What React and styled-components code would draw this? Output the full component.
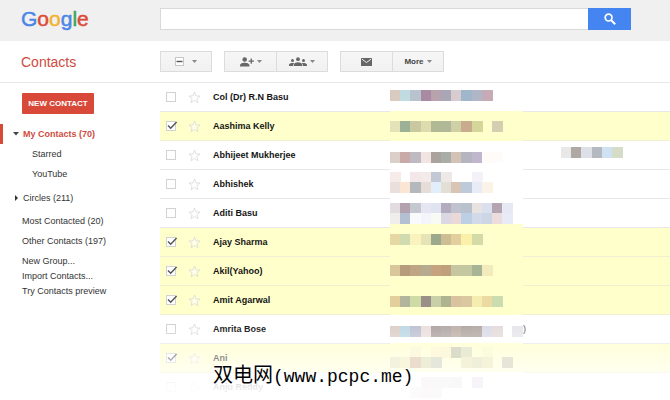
import React, { useState } from "react";
import styled, { createGlobalStyle } from "styled-components";

const Colors = {
    TEXT: "#151515",
    RED: "#d9493a",
    RED_TEXT: "#cf4b40",
    BLUE: "#4585f2",
    BAR: "#f0f0f0",
    LINE: "#e8e8e8",
    SELECTED: "#ffffcc",
    SELECTED_LINE: "#efefd2",
};

const GlobalStyle = createGlobalStyle`
    * {
        box-sizing: border-box;
    }
    body {
        margin: 0;
        background: #fff;
        color: ${Colors.TEXT};
        font-family: "Liberation Sans", Arial, sans-serif;
        font-size: 9px;
    }
    button, input {
        font-family: inherit;
        font-size: inherit;
        color: inherit;
        margin: 0;
        padding: 0;
    }
`;

const Page = styled.div`
    position: relative;
    height: 100vh;
    overflow: hidden;
`;

const Header = styled.header`
    display: flex;
    align-items: flex-start;
    height: 41px;
    padding: 8px 39px 0 0;
    background: ${Colors.BAR};
`;

const Side = styled.div`
    flex: none;
    width: 160px;
`;

const Logo = styled.a`
    display: block;
    padding-left: 21px;
    font-size: 21px;
    line-height: 22px;
    text-decoration: none;
`;

const Letter = styled.span`
    color: ${(props) => props.$color};
    -webkit-text-stroke: 0.5px ${(props) => props.$color};
`;

const Search = styled.form`
    display: flex;
    flex: 1;
    height: 22px;
`;

const SearchInput = styled.input`
    flex: 1;
    min-width: 0;
    padding: 0 6px;
    border: 1px solid #d9d9d9;
    border-right: 0;
    background: #fff;
    outline: none;
`;

const SearchButton = styled.button`
    display: flex;
    align-items: center;
    justify-content: center;
    width: 43px;
    border: 0;
    background: ${Colors.BLUE};
`;

const Toolbar = styled.div`
    display: flex;
    align-items: center;
    height: 42px;
    border-bottom: 1px solid ${Colors.LINE};
`;

const Title = styled.h1`
    margin: 0;
    padding-left: 21px;
    color: ${Colors.RED_TEXT};
    font-size: 14px;
    font-weight: 400;
    line-height: 16px;
`;

const Groups = styled.div`
    display: flex;
    gap: 12px;
`;

const Group = styled.div`
    display: flex;
    height: 21px;
    border: 1px solid #dcdcdc;
    background: linear-gradient(#f6f6f6, #f1f1f1);
`;

const ToolButton = styled.button`
    display: flex;
    align-items: center;
    justify-content: center;
    gap: ${(props) => (props.$wide ? "8px" : "3px")};
    width: ${(props) => (props.$last ? "50px" : "52px")};
    border: 0;
    border-right: ${(props) => (props.$last ? "0" : "1px solid #dcdcdc")};
    background: none;
    color: #444;
    font-size: 8px;
    font-weight: 700;
`;

const Body = styled.div`
    display: flex;
`;

const Nav = styled.nav`
    flex: none;
    width: 160px;
    padding-top: 10px;
`;

const NewContact = styled.button`
    display: block;
    width: 72px;
    height: 21px;
    margin: 0 0 10px 22px;
    border: 0;
    border-radius: 1px;
    background: ${Colors.RED};
    color: #fff;
    font-size: 8px;
    font-weight: 700;
`;

const NavList = styled.div`
    margin-bottom: ${(props) => props.$gap || "0"};
`;

const NavItem = styled.a`
    display: flex;
    align-items: center;
    height: ${(props) => (props.$small ? "15px" : "20px")};
    padding-left: ${(props) => (props.$sub ? "32px" : "22px")};
    color: #333;
    line-height: 15px;
    text-decoration: none;
`;

const NavGroup = styled(NavItem)`
    gap: 4px;
    padding-left: ${(props) => (props.$active ? "10px" : "14px")};
    border-left: ${(props) => (props.$active ? `3px solid ${Colors.RED}` : "0")};
    color: ${(props) => (props.$active ? Colors.RED_TEXT : "#333")};
    font-weight: ${(props) => (props.$active ? "700" : "400")};
`;

const Main = styled.main`
    position: relative;
    flex: 1;
    min-width: 0;
`;

const Table = styled.table`
    width: 100%;
    border-spacing: 0;
    table-layout: fixed;
`;

const Cell = styled.td`
    width: ${(props) => props.$width || "auto"};
    height: 29px;
    padding: 0 0 0 ${(props) => props.$pad || "0"};
    border-bottom: 1px solid ${Colors.LINE};
    color: #555;
    text-align: ${(props) => props.$align || "left"};
`;

const Row = styled.tr`
    background: ${(props) => (props.$selected ? Colors.SELECTED : "#fff")};
    ${Cell} {
        border-color: ${(props) => (props.$selected ? Colors.SELECTED_LINE : Colors.LINE)};
    }
`;

const Name = styled.label`
    color: ${Colors.TEXT};
    font-weight: 700;
`;

const CheckWrap = styled.span`
    position: relative;
    display: block;
    width: 10px;
    height: 10px;
    svg {
        position: absolute;
        left: 1px;
        bottom: 1px;
        pointer-events: none;
    }
`;

const CheckBox = styled.input`
    display: block;
    width: 10px;
    height: 10px;
    appearance: none;
    border: 1px solid #d2d2d2;
    background: #fff;
`;

const StarButton = styled.button`
    display: block;
    width: 13px;
    height: 13px;
    border: 0;
    background: none;
`;

const Hidden = styled.svg`
    position: absolute;
    top: 0;
    left: 230px;
    pointer-events: none;
`;

const Fade = styled.div`
    position: absolute;
    top: 242px;
    left: 0;
    right: 0;
    height: 78px;
    background: linear-gradient(
        rgba(255, 255, 255, 0),
        rgba(255, 255, 255, 0.5) 42%,
        rgba(255, 255, 255, 0.9) 80%,
        #fff
    );
    pointer-events: none;
`;

const Watermark = styled.div`
    position: absolute;
    left: 213px;
    bottom: 10px;
    color: #000;
    font-family: "Liberation Mono", "Noto Sans CJK SC", monospace;
    font-size: 18px;
    line-height: 26px;
    white-space: nowrap;
    text-shadow: 1px 0 #fff, -1px 0 #fff, 0 1px #fff, 0 -1px #fff;
`;

const Site = styled.span`
    font-family: "Noto Sans CJK SC", sans-serif;
    font-size: 20px;
`;

const logo = [
    ["G", "#4a86e8"],
    ["o", "#dc4a38"],
    ["o", "#f3b32a"],
    ["g", "#4a86e8"],
    ["l", "#3aa757"],
    ["e", "#dc4a38"],
];

const people = [
    { name: "Col (Dr) R.N Basu" },
    { name: "Aashima Kelly", on: true },
    { name: "Abhijeet Mukherjee" },
    { name: "Abhishek" },
    { name: "Aditi Basu" },
    { name: "Ajay Sharma", on: true },
    { name: "Akil(Yahoo)", on: true },
    { name: "Amit Agarwal", on: true },
    { name: "Amrita Bose", tail: ")" },
    { name: "Ani", on: true },
    { name: "Anju Reddy" },
];

// pixelated addresses: y, x, one colour per block ("-" is left empty)
const blocks = [
    [7, 0, "d9cbc0 c0dbe2 b9c3ce a98aa3 b8a3ac a9a6b6 d8ccd0 a0b6cb b0b6c5 c6aab6"],
    [38, 0, "e2e3b8 9cb096 c9c8a0 dcdcae b0b894 b0b898 cfd0a5 c9ab8e d5d69c - d4cfb0"],
    [69, 0, "dccfca c9aaa8 bfb9c2 f2e4e3 aaa29d a9ada8 d3c2b6 b4b5c0 c0b7cc fefcf8 fefcf8"],
    [89, 0, "f6ebe9 - f4e7ea f4eaea c3c8d5 eee8e6 - - f4f2f8"],
    [99, 0, "ebdfdb fae6d2 b5b9bd e6ddd6 e2eef9 e4dfd6 d9c5b5 bccadb e8ecf7 fbf4e6"],
    [120, 0, "e2dce0 b3a1b0 c4c9cf e6e6f2 e0e4f0 b3abc0 bfc2cf b9c2cc e8e2e0 dbe0ee b5a5b2 e6e8f4"],
    [130, 0, "f0eeec b3c0d2 f8fafc f2f5f9 f8faf4 dbd8e4 ead9d6 bccfe4 d2d9e8 ccd6e4 ecdcdc e8eaf6"],
    [151, 0, "e5d8a5 d0dcb0 fbf3bd e6e3b4 9da98c cdbd92 e3cf9e fbf0a8 d5dba6"],
    [182, 0, "d9c69a b59c7c bfa583 b4ab90 c6a27e c0a07c c5c7a0 c3c8a0 a8b496 f3ebbc"],
    [213, 0, "e2cf9c b2b49c cedba6 9a9088 c9d0a8 aeb490 d9c39e d9c8a0 f5ecb0 ebdba2 cbdcb0"],
    [243, 0, "ddd0ca bfd9e6 c0c3d4 ece0de b1a7a5 b3aba9 c0b2ac b3a9a4 b5aaa6 dcdce8 e6dcdc - e6e6ec"],
    [64, 171, "e9e8e8 b0a8a2 dde0e6 b5b9c0 cfe2f2 d5dcc8"],
];

const fadedBlocks = [
    [264, 0, "- - fdf9e0 - fdf8de fbf8de dcdccb eaebd4 - fbfbde"],
    [274, 0, "f3f2de f8f7de eaddce eeedd8 e4e7d9 - - f5f2da f0f0da f5f3da - e6e5d8"],
    [294, 0, "- - - faf8f9 faf9f9 faf9f9 f9f8f8 - f6f4f8"],
    [304, 0, "- - fcfbfb fbf9f9 fbfafa"],
];

// y, height, colour of the plain strips that cover the row lines
const strips = [
    [2, 26, "#fff"],
    [28, 30, Colors.SELECTED],
    [58, 83, "#fff"],
    [141, 91, Colors.SELECTED],
    [232, 28, "#fff"],
    [260, 29, Colors.SELECTED],
    [289, 28, "#fff"],
];

function Blocks({ rows, children }) {
    return (
        <Hidden width="240" height="317" shapeRendering="crispEdges" aria-hidden="true">
            {children}
            {rows.map(([y, x, list]) =>
                list.split(" ").map((c, i) =>
                    c === "-" ? null : (
                        <rect
                            key={`${y}-${i}`}
                            x={x + Math.round(i * 10.2)}
                            y={y}
                            width="10.5"
                            height="10.5"
                            fill={`#${c}`}
                        />
                    )
                )
            )}
        </Hidden>
    );
}

function Caret() {
    return (
        <svg width="5" height="3" viewBox="0 0 5 3">
            <path d="M0 0h5L2.5 3z" fill="#888" />
        </svg>
    );
}

function Star() {
    return (
        <svg width="13" height="13" viewBox="0 0 13 13">
            <path
                d="M6.5 1l1.5 3.9 4 .2-3.100 2.600 1 4-3.400-2.200-3.400 2.200 1-4L1 5.100l4-.2z"
                fill="#fff"
                fillOpacity=".5"
                stroke="#d8d8d8"
                strokeWidth=".8"
            />
        </svg>
    );
}

function Check({ id, checked, onChange }) {
    return (
        <CheckWrap>
            <CheckBox id={id} type="checkbox" checked={checked} onChange={onChange} />
            {checked && (
                <svg width="11" height="9" viewBox="0 0 11 9">
                    <path d="M1 4.500l2.700 2.700L9.600 1" fill="none" stroke="#555" strokeWidth="1.400" />
                </svg>
            )}
        </CheckWrap>
    );
}

function App() {
    const [list, setList] = useState(people);

    const toggle = (index) => {
        setList(list.map((p, i) => (i === index ? { ...p, on: !p.on } : p)));
    };

    return (
        <Page>
            <GlobalStyle />
            <Header>
                <Side>
                    <Logo href="#">
                        {logo.map(([letter, color], i) => (
                            <Letter key={i} $color={color}>{letter}</Letter>
                        ))}
                    </Logo>
                </Side>
                <Search onSubmit={(e) => e.preventDefault()}>
                    <SearchInput type="text" aria-label="Search" />
                    <SearchButton aria-label="Search">
                        <svg width="12" height="12" viewBox="0 0 12 12" fill="none" stroke="#fff">
                            <circle cx="4.600" cy="4.600" r="3.400" strokeWidth="1.700" />
                            <path d="M7 7l4.200 4.200" strokeWidth="2" />
                        </svg>
                    </SearchButton>
                </Search>
            </Header>

            <Toolbar>
                <Side>
                    <Title>Contacts</Title>
                </Side>
                <Groups>
                    <Group>
                        <ToolButton $last $wide aria-label="Select">
                            <svg width="9" height="9" viewBox="0 0 9 9">
                                <rect x=".5" y=".5" width="8" height="8" fill="#fff" stroke="#c6c6c6" />
                                <path d="M1.500 4.500h6" stroke="#555" strokeWidth="1.400" />
                            </svg>
                            <Caret />
                        </ToolButton>
                    </Group>
                    <Group>
                        <ToolButton aria-label="Add to My Contacts">
                            <svg width="14" height="10" viewBox="0 0 14 10" fill="#666">
                                <circle cx="4.700" cy="2.500" r="2.300" />
                                <path d="M0 9.500V8.200C0 6.500 2.800 5.700 4.700 5.700s4.700.8 4.700 2.500v1.300z" />
                                <path d="M10.600 1.500h1.300v2h2v1.300h-2v2h-1.300v-2h-2V3.500h2z" />
                            </svg>
                            <Caret />
                        </ToolButton>
                        <ToolButton $last aria-label="Groups">
                            <svg width="18" height="10" viewBox="0 0 18 10" fill="#666">
                                <circle cx="3.500" cy="3.500" r="1.500" />
                                <circle cx="9" cy="2.200" r="1.900" />
                                <circle cx="14.500" cy="3.500" r="1.500" />
                                <path d="M0 9V7.700C0 6.500 2 6 3.500 6c.6 0 1.300.1 1.800.3-.7.500-1 1-1 1.700v1z" />
                                <path d="M5 9V7.400C5 6 7.300 5.300 9 5.300s4 .7 4 2.100V9z" />
                                <path d="M13.700 9V8c0-.7-.3-1.200-1-1.700.5-.2 1.200-.3 1.800-.3 1.500 0 3.500.5 3.500 1.700V9z" />
                            </svg>
                            <Caret />
                        </ToolButton>
                    </Group>
                    <Group>
                        <ToolButton aria-label="Email">
                            <svg width="11" height="8" viewBox="0 0 11 8">
                                <rect width="11" height="8" rx=".6" fill="#666" />
                                <path d="M1 1.200l4.500 3.300L10 1.200" fill="none" stroke="#eee" />
                            </svg>
                        </ToolButton>
                        <ToolButton $last>
                            More
                            <Caret />
                        </ToolButton>
                    </Group>
                </Groups>
            </Toolbar>

            <Body>
                <Nav>
                    <NewContact>NEW CONTACT</NewContact>
                    <NavList $gap="4px">
                        <NavGroup href="#" $active>
                            <svg width="6" height="4" viewBox="0 0 6 4">
                                <path d="M0 0h6L3 3.500z" fill="#444" />
                            </svg>
                            My Contacts (70)
                        </NavGroup>
                        <NavItem href="#" $sub>Starred</NavItem>
                        <NavItem href="#" $sub>YouTube</NavItem>
                    </NavList>
                    <NavList $gap="3px">
                        <NavGroup href="#">
                            <svg width="5" height="6" viewBox="0 0 5 6">
                                <path d="M1 0l3 3-3 3z" fill="#333" />
                            </svg>
                            Circles (211)
                        </NavGroup>
                    </NavList>
                    <NavList $gap="3px">
                        <NavItem href="#">Most Contacted (20)</NavItem>
                        <NavItem href="#">Other Contacts (197)</NavItem>
                    </NavList>
                    <NavList>
                        <NavItem href="#" $small>New Group...</NavItem>
                        <NavItem href="#" $small>Import Contacts...</NavItem>
                        <NavItem href="#" $small>Try Contacts preview</NavItem>
                    </NavList>
                </Nav>

                <Main>
                    <Table>
                        <tbody>
                            {list.map((p, i) => (
                                <Row key={p.name} $selected={p.on}>
                                    <Cell $width="28px" $pad="6px">
                                        <Check id={`c${i}`} checked={!!p.on} onChange={() => toggle(i)} />
                                    </Cell>
                                    <Cell $width="25px">
                                        <StarButton aria-label={`Star ${p.name}`}>
                                            <Star />
                                        </StarButton>
                                    </Cell>
                                    <Cell $width="177px">
                                        <Name htmlFor={`c${i}`}>{p.name}</Name>
                                    </Cell>
                                    <Cell $width="136px" $align="right">{p.tail}</Cell>
                                    <Cell />
                                </Row>
                            ))}
                        </tbody>
                    </Table>
                    <Blocks rows={blocks}>
                        {strips.map(([y, h, color]) => (
                            <rect key={y} y={y} width="133" height={h} fill={color} />
                        ))}
                    </Blocks>
                    <Fade />
                    <Blocks rows={fadedBlocks} />
                </Main>
            </Body>
            <Watermark><Site>双电网</Site>(www.pcpc.me)</Watermark>
        </Page>
    );
}

export default App;
